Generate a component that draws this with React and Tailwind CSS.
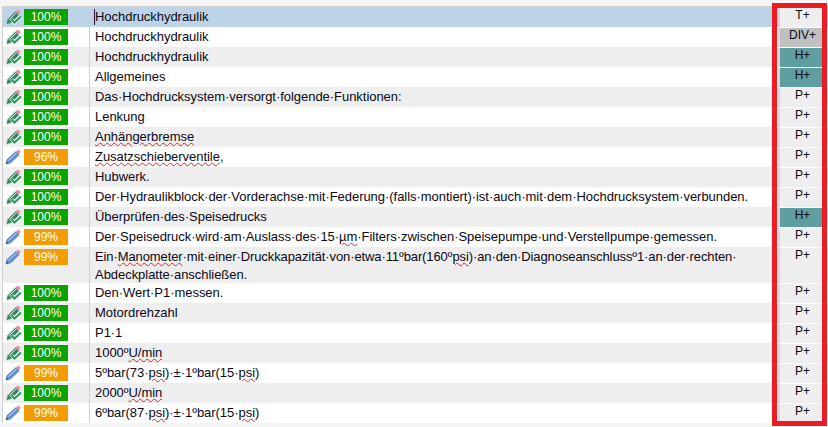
const rows = [
  { pct: 100, text: 'Hochdruckhydraulik', tag: 'T+', selected: true },
  { pct: 100, text: 'Hochdruckhydraulik', tag: 'DIV+' },
  { pct: 100, text: 'Hochdruckhydraulik', tag: 'H+' },
  { pct: 100, text: 'Allgemeines', tag: 'H+' },
  { pct: 100, text: 'Das·Hochdrucksystem·versorgt·folgende·Funktionen:', tag: 'P+' },
  { pct: 100, text: 'Lenkung', tag: 'P+' },
  { pct: 100, text: [['Anhängerbremse']], tag: 'P+' },
  { pct: 96, text: [['Zusatzschieberventile'], ','], tag: 'P+' },
  { pct: 100, text: 'Hubwerk.', tag: 'P+' },
  { pct: 100, text: 'Der·Hydraulikblock·der·Vorderachse·mit·Federung·(falls·montiert)·ist·auch·mit·dem·Hochdrucksystem·verbunden.', tag: 'P+' },
  { pct: 100, text: 'Überprüfen·des·Speisedrucks', tag: 'H+' },
  { pct: 99, text: ['Der·Speisedruck·wird·am·Auslass·des·15·', ['µm'], '·Filters·zwischen·Speisepumpe·und·Verstellpumpe·gemessen.'], tag: 'P+' },
  { pct: 99, second: 'Abdeckplatte·anschließen.', text: ['Ein·', ['Manometer'], '·mit·einer·Druckkapazität·von·etwa·11ºbar(160º', ['psi'], ')·an·den·Diagnoseanschlussº1·an·der·rechten·'], tag: 'P+' },
  { pct: 100, text: 'Den·Wert·P1·messen.', tag: 'P+' },
  { pct: 100, text: 'Motordrehzahl', tag: 'P+' },
  { pct: 100, text: 'P1·1', tag: 'P+' },
  { pct: 100, text: ['1000º', ['U/min']], tag: 'P+' },
  { pct: 99, text: ['5ºbar(73·', ['psi'], ')·±·1ºbar(15·', ['psi'], ')'], tag: 'P+' },
  { pct: 100, text: ['2000º', ['U/min']], tag: 'P+' },
  { pct: 99, text: ['6ºbar(87·', ['psi'], ')·±·1ºbar(15·', ['psi'], ')'], tag: 'P+' },
];

const tagStyles = {
  'T+': 'bg-[#eeeeee]',
  'DIV+': 'bg-[#c0c0c0]',
  'H+': 'bg-[#5f9ea0]',
  'P+': 'bg-[#eeeeee]',
};

function EditIcon({ done }) {
  if (done) {
    return (
      <svg width="17" height="16" viewBox="0 0 17 16" className="shrink-0">
        <path d="M1.5 15 L2.5 10.5 L10.5 2.5 L14 6 L6 14 Z" fill="#2f8a68" />
        <path d="M4 11 L11 4" stroke="#d8efe4" strokeWidth="1" fill="none" />
        <path d="M10.5 2.5 L12.5 0.5 L15.5 2.5 L14 6 Z" fill="#ea8aa2" />
        <path d="M6.5 10.5 L9.5 13.5 L16 7.5" stroke="#ffffff" strokeWidth="3.5" fill="none" />
        <path d="M6.5 10.5 L9.5 13.5 L16 7.5" stroke="#1f9d57" strokeWidth="2" fill="none" />
      </svg>
    );
  }
  return (
    <svg width="17" height="16" viewBox="0 0 17 16" className="shrink-0">
      <path d="M1 15 L2 10.5 L11 2.5 L14 6 L5.5 14 Z" fill="#5f93d6" stroke="#4a76b0" strokeWidth="0.6" />
      <path d="M3.5 11.5 L11.5 4" stroke="#c4daf2" strokeWidth="1" fill="none" />
      <path d="M11 2.5 L13 0.5 L15.5 2.5 L14 6 Z" fill="#ea8aa2" />
      <path d="M1 15 L1.6 12.5 L3.5 14.2 Z" fill="#2f4f7a" />
    </svg>
  );
}

function RowText({ text }) {
  const parts = Array.isArray(text) ? text : [text];
  return parts.map((part, i) => {
    if (Array.isArray(part)) {
      return (
        <span key={i} className="underline decoration-wavy decoration-[#e8202a] decoration-1 underline-offset-1">
          {part[0]}
        </span>
      );
    }
    return <span key={i}>{part}</span>;
  });
}

export default function App() {
  return (
    <div className="relative h-[427px] w-[828px] overflow-hidden bg-[#f5f5f5] font-['Liberation_Sans',Arial,sans-serif] text-[13px] text-[#0c0814]">
      <div className="h-[6px]" />
      <div className="ml-[2px] border-t border-l border-[#d0d0d0]">
        {rows.map((row, i) => (
          <div
            key={i}
            className={`flex ${row.second ? 'h-[36px]' : 'h-[20px]'} ${
              row.selected ? 'bg-[#bdd4e8]' : i % 2 === 0 ? 'bg-[#eeeeee]' : 'bg-white'
            }`}
          >
            <div className="flex w-[87px] shrink-0 items-start gap-[2px] border-r border-[#d0d0d0] pt-[2px] pl-[2px]">
              <EditIcon done={row.pct === 100} />
              <div
                className={`flex h-[16px] w-[44px] items-center justify-center text-[12px] text-white ${
                  row.pct === 100 ? 'bg-[#0ca300]' : 'bg-[#f39c00]'
                }`}
              >
                {row.pct}%
              </div>
            </div>
            <div className="relative min-w-0 flex-1 pt-[1px] pl-[5px] leading-[18px] tracking-[-0.04px]">
              {row.selected && <span className="absolute top-[2px] left-[4px] h-[16px] w-[1px] bg-[#301030]" />}
              {row.second ? (
                <>
                  <div className="tracking-[-0.1px]">
                    <RowText text={row.text} />
                  </div>
                  <div>{row.second}</div>
                </>
              ) : (
                <RowText text={row.text} />
              )}
            </div>
            <div
              className={`mr-[5px] flex w-[45px] shrink-0 justify-center border-t border-l-2 border-t-white border-l-[#d8d8d8] pl-[2px] text-[12px] leading-[15px] ${tagStyles[row.tag]}`}
            >
              {row.tag}
            </div>
          </div>
        ))}
      </div>
      <div className="pointer-events-none absolute top-[3px] left-[772px] h-[423px] w-[55px] border-[5px] border-[#ed1c24]" />
    </div>
  );
}
